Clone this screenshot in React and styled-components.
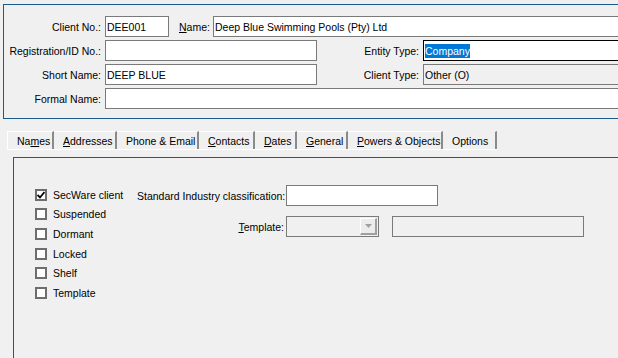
import styled, { createGlobalStyle } from 'styled-components';

const GlobalStyle = createGlobalStyle`
  html, body {
    margin: 0;
    padding: 0;
    background: #f0f0f0;
    overflow: hidden;
  }
  body {
    font-family: "Liberation Sans", Arial, sans-serif;
    font-size: 10.5px;
    color: #000;
  }
`;

const Window = styled.div`
  width: 618px;
  height: 358px;
  overflow: hidden;
  display: flex;
  flex-direction: column;
`;

const HeaderPanel = styled.div`
  margin: 4px 0 0 3px;
  width: 660px;
  height: 115px;
  box-sizing: border-box;
  border: 1px solid #1b5b8c;
  padding: 11px 0 0 0;
  display: flex;
  flex-direction: column;
  gap: 3px;
`;

const Row = styled.div`
  display: flex;
  align-items: center;
  height: 21px;
  gap: 4px;
`;

const Label = styled.label`
  width: ${(p) => p.$w}px;
  margin-left: ${(p) => p.$ml || 0}px;
  text-align: right;
  white-space: nowrap;
  flex-shrink: 0;
`;

const Input = styled.div`
  box-sizing: border-box;
  height: 21px;
  width: ${(p) => (p.$w ? `${p.$w}px` : 'auto')};
  flex: ${(p) => (p.$w ? '0 0 auto' : '1')};
  margin-right: ${(p) => (p.$w ? 0 : 40)}px;
  border: 1px solid ${(p) => (p.$focus ? '#000' : '#7a7a7a')};
  background: ${(p) => (p.$disabled ? '#f0f0f0' : '#fff')};
  padding: 0 1px;
  display: flex;
  align-items: center;
  white-space: nowrap;
  overflow: hidden;
`;

const Selected = styled.span`
  background: #0078d7;
  color: #fff;
  padding: 1px 0;
`;

const TabStrip = styled.div`
  margin: 12px 0 0 7px;
  display: flex;
  height: 18px;
  align-self: flex-start;
  border-bottom: 1px solid #fff;
`;

const Tab = styled.div`
  box-sizing: border-box;
  width: ${(p) => p.$w}px;
  padding-left: 9px;
  display: flex;
  align-items: center;
  white-space: nowrap;
  overflow: hidden;
  border-top: 1px solid ${(p) => (p.$active ? 'transparent' : '#fff')};
  border-left: ${(p) => (p.$first ? '1px solid #fff' : 'none')};
  border-right: 2px solid #8a8a8a;
  padding-top: ${(p) => (p.$active ? 0 : 1)}px;
`;

const Page = styled.div`
  margin: 7px 0 0 13px;
  flex: 1;
  border-top: 1px solid #1b5b8c;
  border-left: 1px solid #1b5b8c;
  padding: 27px 0 0 21px;
  display: flex;
  align-items: flex-start;
`;

const CheckList = styled.div`
  width: 102px;
  display: flex;
  flex-direction: column;
`;

const CheckRow = styled.div`
  height: 19.6px;
  display: flex;
  align-items: center;
  gap: 6px;
  white-space: nowrap;
`;

const Box = styled.span`
  box-sizing: border-box;
  width: 12px;
  height: 12px;
  border: 2px solid #6e6e6e;
  background: #fff;
  display: flex;
  align-items: center;
  justify-content: center;
`;

const OptionsForm = styled.div`
  display: grid;
  grid-template-columns: 147px auto;
  column-gap: 2px;
  row-gap: 10px;
  align-items: center;
`;

const FieldLabel = styled.label`
  text-align: right;
  white-space: nowrap;
`;

const FieldLine = styled.div`
  display: flex;
  gap: 13px;
`;

const Combo = styled.div`
  box-sizing: border-box;
  width: 93px;
  height: 21px;
  border: 1px solid #7a7a7a;
  background: #f0f0f0;
  display: flex;
  justify-content: flex-end;
  padding: 1px;
`;

const DropButton = styled.div`
  box-sizing: border-box;
  width: 17px;
  height: 17px;
  background: #ececec;
  border-top: 1px solid #fff;
  border-left: 1px solid #fff;
  border-right: 2px solid #a0a0a0;
  border-bottom: 2px solid #a0a0a0;
  display: flex;
  align-items: center;
  justify-content: center;
`;

const tabs = [
  { w: 47, label: <>Na<u>m</u>es</> },
  { w: 63, label: <><u>A</u>ddresses</> },
  { w: 82, label: <>Phone &amp; Email</> },
  { w: 56, label: <><u>C</u>ontacts</> },
  { w: 42, label: <><u>D</u>ates</> },
  { w: 51, label: <><u>G</u>eneral</> },
  { w: 95, label: <><u>P</u>owers &amp; Objects</> },
  { w: 54, label: <>Options</>, active: true },
];

const checks = [
  { label: 'SecWare client', on: true },
  { label: 'Suspended' },
  { label: 'Dormant' },
  { label: 'Locked' },
  { label: 'Shelf' },
  { label: 'Template' },
];

function Check({ on, children }) {
  return (
    <CheckRow>
      <Box>
        {on && (
          <svg width="8" height="8" viewBox="0 0 8 8">
            <path d="M0.5 4 L3 6.5 L7.5 1" fill="none" stroke="#000" strokeWidth="1.8" />
          </svg>
        )}
      </Box>
      {children}
    </CheckRow>
  );
}

export default function App() {
  return (
    <Window>
      <GlobalStyle />
      <HeaderPanel>
        <Row>
          <Label $w={97}>Client No.:</Label>
          <Input $w={64}>DEE001</Input>
          <Label $w={30} $ml={6}><u>N</u>ame:</Label>
          <Input>Deep Blue Swimming Pools (Pty) Ltd</Input>
        </Row>
        <Row>
          <Label $w={97}>Registration/ID No.:</Label>
          <Input $w={212} />
          <Label $w={98}>Entity Type:</Label>
          <Input $focus>
            <Selected>Company</Selected>
          </Input>
        </Row>
        <Row>
          <Label $w={97}>Short Name:</Label>
          <Input $w={212}>DEEP BLUE</Input>
          <Label $w={98}>Client Type:</Label>
          <Input $disabled>Other (O)</Input>
        </Row>
        <Row>
          <Label $w={97}>Formal Name:</Label>
          <Input />
        </Row>
      </HeaderPanel>

      <TabStrip>
        {tabs.map((t, i) => (
          <Tab key={i} $w={t.w} $first={i === 0} $active={t.active}>
            {t.label}
          </Tab>
        ))}
      </TabStrip>

      <Page>
        <CheckList>
          {checks.map((c) => (
            <Check key={c.label} on={c.on}>
              {c.label}
            </Check>
          ))}
        </CheckList>
        <OptionsForm>
          <FieldLabel>Standard Industry classification:</FieldLabel>
          <Input $w={152} />
          <FieldLabel><u>T</u>emplate:</FieldLabel>
          <FieldLine>
            <Combo>
              <DropButton>
                <svg width="7" height="4" viewBox="0 0 7 4">
                  <path d="M0 0 H7 L3.5 4 Z" fill="#a0a0a0" />
                </svg>
              </DropButton>
            </Combo>
            <Input $w={192} $disabled />
          </FieldLine>
        </OptionsForm>
      </Page>
    </Window>
  );
}
